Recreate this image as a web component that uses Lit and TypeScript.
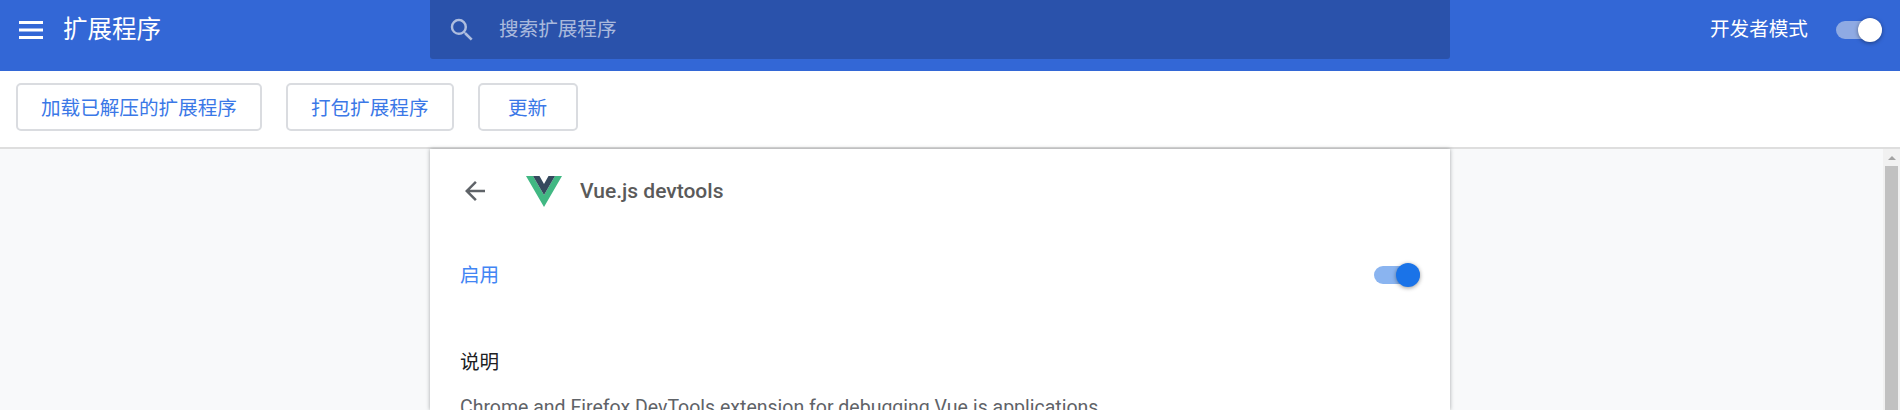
import { LitElement, html, css } from "lit";
import { customElement } from "lit/decorators.js";

@customElement("app-root")
export class AppRoot extends LitElement {
  static styles = css`
    :host {
      display: flex;
      flex-direction: column;
      width: 1900px;
      height: 410px;
      overflow: hidden;
      background: #f8f9fa;
      font-family: Roboto, "Noto Sans CJK SC", sans-serif;
      font-size: 19.6px;
    }
    .header {
      flex: none;
      height: 71px;
      background: #3367d6;
      color: #fff;
      display: flex;
      align-items: flex-start;
    }
    .left {
      width: 430px;
      height: 59px;
      display: flex;
      align-items: center;
      flex: none;
    }
    .menu {
      width: 24px;
      height: 18px;
      margin-left: 19px;
      display: block;
    }
    .title {
      margin-left: 20px;
      font-size: 24.5px;
      line-height: 30px;
    }
    .search {
      width: 1020px;
      height: 59px;
      flex: none;
      background: #2a52ab;
      border-radius: 0 0 3px 3px;
      display: flex;
      align-items: center;
      color: rgba(255, 255, 255, 0.62);
    }
    .search svg {
      margin-left: 17px;
      width: 30px;
      height: 30px;
      flex: none;
    }
    .search span {
      margin-left: 22px;
      line-height: 28px;
    }
    .dev {
      flex: 1;
      height: 59px;
      display: flex;
      align-items: center;
      padding-left: 260px;
    }
    .dev span {
      line-height: 28px;
    }
    .switch {
      position: relative;
      width: 46px;
      height: 18px;
      border-radius: 9px;
      flex: none;
    }
    .switch::after {
      content: "";
      position: absolute;
      top: -3px;
      right: 0;
      width: 24px;
      height: 24px;
      border-radius: 50%;
      box-shadow: 0 1px 4px rgba(0, 0, 0, 0.4);
    }
    .dev .switch {
      margin-left: 28px;
      background: #8faae3;
    }
    .dev .switch::after {
      background: #fff;
    }
    .toolbar {
      flex: none;
      background: #fff;
      border-bottom: 2px solid #dedede;
      display: flex;
      align-items: flex-start;
      gap: 24px;
      padding: 12px 0 0 16px;
      box-sizing: border-box;
      height: 78px;
    }
    .btn {
      height: 48px;
      min-width: 100px;
      box-sizing: border-box;
      border: 2px solid #dadce0;
      border-radius: 5px;
      background: #fff;
      color: #3b78e7;
      display: flex;
      align-items: center;
      justify-content: center;
      padding: 0 23px 2px;
    }
    .body {
      flex: 1;
      min-height: 0;
      display: flex;
      position: relative;
    }
    .card {
      margin-left: 430px;
      width: 1020px;
      height: 100%;
      flex: none;
      background: #fff;
      box-shadow: 0 0 4px rgba(60, 64, 67, 0.45);
      box-sizing: border-box;
      overflow: hidden;
    }
    .card-head {
      height: 84px;
      display: flex;
      align-items: center;
      padding-left: 35px;
    }
    .back {
      width: 20px;
      height: 20px;
      display: block;
      flex: none;
    }
    .logo {
      width: 36px;
      height: 31px;
      margin-left: 41px;
      flex: none;
      display: block;
    }
    .name {
      margin-left: 18px;
      font-size: 21px;
      font-weight: 500;
      color: #5a5a5a;
    }
    .row {
      display: flex;
      align-items: center;
      justify-content: space-between;
      height: 30px;
      margin-top: 27px;
      padding: 0 30px;
    }
    .on {
      color: #4285f4;
      line-height: 28px;
      padding-top: 2px;
    }
    .row .switch {
      background: #8ab4f0;
    }
    .row .switch::after {
      background: #1a73e8;
    }
    .h {
      padding-left: 30px;
      margin-top: 58px;
      line-height: 30px;
      color: #202124;
    }
    .desc {
      padding-left: 30px;
      margin-top: 15px;
      line-height: 30px;
      font-size: 19.5px;
      color: #5f6368;
    }
    .scroll {
      position: absolute;
      right: 0;
      top: 0;
      bottom: 0;
      width: 17px;
      background: #f1f1f1;
    }
    .arrow {
      position: absolute;
      left: 5px;
      top: 7px;
      width: 0;
      height: 0;
      border: 4px solid transparent;
      border-top: 0;
      border-bottom: 4px solid #a3a3a3;
    }
    .thumb {
      position: absolute;
      left: 2px;
      right: 2px;
      top: 17px;
      bottom: 0;
      background: #c1c1c1;
    }
  `;

  render() {
    return html`
      <div class="header">
        <div class="left">
          <svg class="menu" viewBox="0 0 24 18" fill="#fff">
            <rect y="0" width="24" height="3"></rect>
            <rect y="7.5" width="24" height="3"></rect>
            <rect y="15" width="24" height="3"></rect>
          </svg>
          <div class="title">扩展程序</div>
        </div>
        <div class="search">
          <svg viewBox="0 0 24 24" fill="rgba(255,255,255,.62)">
            <path d="M15.5 14h-.79l-.28-.27A6.47 6.47 0 0 0 16 9.5 6.5 6.5 0 1 0 9.5 16c1.61 0 3.09-.59 4.23-1.57l.27.28v.79l5 4.99L20.49 19l-4.99-5zm-6 0C7.01 14 5 11.99 5 9.5S7.01 5 9.5 5 14 7.01 14 9.5 11.99 14 9.5 14z"></path>
          </svg>
          <span>搜索扩展程序</span>
        </div>
        <div class="dev">
          <span>开发者模式</span>
          <div class="switch"></div>
        </div>
      </div>
      <div class="toolbar">
        <div class="btn">加载已解压的扩展程序</div>
        <div class="btn">打包扩展程序</div>
        <div class="btn">更新</div>
      </div>
      <div class="body">
        <div class="card">
          <div class="card-head">
            <svg class="back" viewBox="0 0 20 20" fill="#5f6368">
              <path d="M20 8.75H4.79l6.99-6.99L10 0 0 10l10 10 1.76-1.76-6.97-6.99H20z"></path>
            </svg>
            <svg class="logo" viewBox="0 0 36 31">
              <path fill="#41b883" d="M0 0h7l11 19L29 0h7L18 31z"></path>
              <path fill="#35495e" d="M7 0h6.5L18 8l4.5-8H29L18 19z"></path>
            </svg>
            <div class="name">Vue.js devtools</div>
          </div>
          <div class="row">
            <span class="on">启用</span>
            <div class="switch"></div>
          </div>
          <div class="h">说明</div>
          <div class="desc">Chrome and Firefox DevTools extension for debugging Vue.js applications.</div>
        </div>
        <div class="scroll">
          <div class="arrow"></div>
          <div class="thumb"></div>
        </div>
      </div>
    `;
  }
}
